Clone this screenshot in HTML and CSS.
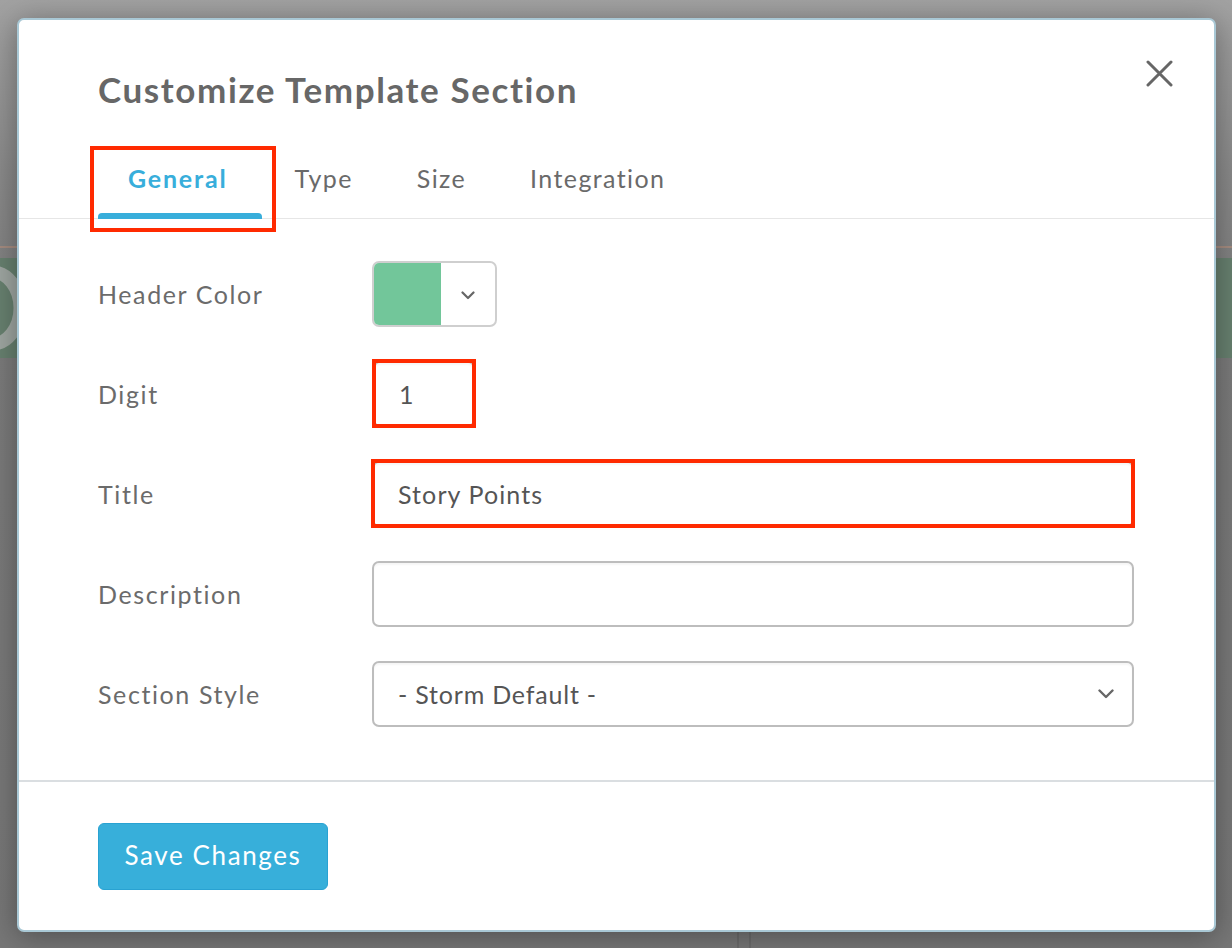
FILE: index.html
```html
<!DOCTYPE html>
<html lang="en">
<head>
<meta charset="utf-8">
<title>Customize Template Section</title>
<link rel="stylesheet" href="styles.css">
</head>
<body>
<div class="backdrop">
  <div class="bg-top"></div>
  <div class="bg-line"></div>
  <div class="bg-band">
    <svg class="bg-glyph" width="60" height="90" viewBox="0 0 60 90"><ellipse cx="20" cy="45" rx="28" ry="36" stroke="#9ea6a1" stroke-width="13" fill="none"/></svg>
  </div>
  <div class="bg-rest"><div class="bg-cols"></div></div>
</div>

<div class="modal">
  <header class="modal-head">
    <h1 class="modal-title">Customize Template Section</h1>
    <button class="close" aria-label="Close">
      <svg width="27" height="27" viewBox="0 0 27 27"><path d="M2 2 L25 25 M25 2 L2 25" stroke="#666" stroke-width="3" stroke-linecap="round" fill="none"/></svg>
    </button>
  </header>

  <nav class="tabs">
    <a class="tab tab-active marked">General</a>
    <a class="tab">Type</a>
    <a class="tab">Size</a>
    <a class="tab">Integration</a>
  </nav>

  <div class="modal-body">
    <div class="row">
      <label class="label">Header Color</label>
      <div class="color-picker">
        <span class="swatch"></span>
        <span class="picker-toggle">
          <svg width="14" height="9" viewBox="0 0 14 9"><path d="M1.5 1.5 L7 7 L12.5 1.5" stroke="#666" stroke-width="2.2" fill="none" stroke-linecap="round" stroke-linejoin="round"/></svg>
        </span>
      </div>
    </div>
    <div class="row">
      <label class="label">Digit</label>
      <div class="field field-digit marked-box">1</div>
    </div>
    <div class="row">
      <label class="label">Title</label>
      <div class="field field-wide marked-box">Story Points</div>
    </div>
    <div class="row">
      <label class="label">Description</label>
      <div class="field field-wide"></div>
    </div>
    <div class="row">
      <label class="label">Section Style</label>
      <div class="field field-wide select">
        <span>- Storm Default -</span>
        <svg width="16" height="10" viewBox="0 0 16 10"><path d="M1.5 1.5 L8 8 L14.5 1.5" stroke="#666" stroke-width="2.4" fill="none" stroke-linecap="round" stroke-linejoin="round"/></svg>
      </div>
    </div>
  </div>

  <footer class="modal-foot">
    <button class="btn-primary">Save Changes</button>
  </footer>
</div>
</body>
</html>
```

FILE: styles.css
```css
* { box-sizing: border-box; }

html, body {
  margin: 0;
  padding: 0;
  width: 1232px;
  height: 948px;
  overflow: hidden;
}

body {
  font-family: "Lato", "Open Sans", sans-serif;
  position: relative;
  background: #7a7a7a;
}

/* page behind the overlay */
.backdrop {
  position: absolute;
  inset: 0;
  display: flex;
  flex-direction: column;
  background: linear-gradient(180deg, #a2a2a2 0%, #8a8a8a 18%, #7b7b7b 35%, #777 100%);
}
.bg-top { height: 246px; }
.bg-line { height: 2px; background: #a58c80; }
.bg-band {
  margin-top: 10px;
  height: 100px;
  background: #67806f;
  overflow: hidden;
  position: relative;
}
.bg-glyph {
  position: absolute;
  left: -28px;
  top: 5px;
}
.bg-rest { flex: 1; position: relative; }
.bg-cols {
  position: absolute;
  left: 737px;
  bottom: 0;
  width: 14px;
  height: 20px;
  border-left: 2px solid #6c6c6c;
  border-right: 2px solid #6c6c6c;
}

/* modal (floats over the page) */
.modal {
  position: absolute;
  left: 17px;
  top: 18px;
  width: 1199px;
  background: #fff;
  border: 2px solid #a9c8d5;
  border-radius: 7px;
  box-shadow: 0 4px 30px rgba(0,0,0,0.35);
  color: #686868;
}

.modal-head {
  display: flex;
  justify-content: space-between;
  align-items: flex-start;
  padding: 48px 41px 0 79px;
}
.modal-title {
  margin: 0;
  font-size: 35px;
  line-height: 42px;
  font-weight: 700;
  letter-spacing: 1.6px;
  color: #676767;
}
.close {
  margin-top: -8px;
  padding: 0;
  border: 0;
  background: none;
  width: 27px;
  height: 27px;
  display: flex;
}

.tabs {
  margin-top: 36px;
  display: flex;
  padding-left: 79px;
  border-bottom: 1px solid #e6e6e6;
  height: 73px;
}
.tab {
  position: relative;
  height: 72px;
  padding: 17px 32px 0;
  font-size: 25px;
  line-height: 30px;
  letter-spacing: 1.4px;
  color: #6a6a6a;
}
.tab:first-child { padding-left: 30px; padding-right: 35px; }
.tab-active {
  color: #38aedb;
  font-weight: 700;
  letter-spacing: 1.8px;
}
.tab-active::after {
  content: "";
  position: absolute;
  left: 0;
  right: 0;
  bottom: -1px;
  height: 6px;
  border-radius: 4px 4px 0 0;
  background: #38aedb;
}
.marked::before {
  content: "";
  position: absolute;
  left: -8px;
  right: -14px;
  top: 0;
  bottom: -14px;
  border: 4px solid #ff2a00;
}

.modal-body {
  padding: 42px 80px 53px 79px;
  display: flex;
  flex-direction: column;
  gap: 34px;
}
.row {
  display: flex;
  align-items: center;
  height: 66px;
}
.label {
  width: 274px;
  font-size: 25px;
  letter-spacing: 1.6px;
  color: #6b6b6b;
}

.color-picker {
  width: 125px;
  height: 66px;
  border: 2px solid #cfcfcf;
  border-radius: 7px;
  display: flex;
  overflow: hidden;
}
.swatch {
  width: 67px;
  background: #72c69a;
}
.picker-toggle {
  flex: 1;
  display: flex;
  align-items: center;
  justify-content: center;
  padding-top: 2px;
}

.field {
  position: relative;
  height: 66px;
  border: 2px solid #bdbdbd;
  border-radius: 7px;
  box-shadow: inset 0 2px 2px rgba(0,0,0,0.04);
  display: flex;
  align-items: center;
  padding: 0 20px 0 24px;
  font-size: 25px;
  letter-spacing: 1.1px;
  color: #555;
}
.field-digit { width: 102px; margin-left: 1px; }
.field-wide { width: 762px; }
.marked-box::after {
  content: "";
  position: absolute;
  left: -3px;
  right: -3px;
  top: -4px;
  bottom: -3px;
  border: 4px solid #ff2a00;
}
.select {
  justify-content: space-between;
  padding-right: 18px;
  letter-spacing: 0.8px;
}

.modal-foot {
  border-top: 2px solid #dadee1;
  padding: 41px 79px 40px;
  display: flex;
}
.btn-primary {
  width: 230px;
  height: 67px;
  background: #37afda;
  border: 1px solid #29a2d2;
  border-radius: 6px;
  color: #fff;
  font-family: "Lato", sans-serif;
  font-size: 26px;
  letter-spacing: 1.6px;
  padding: 0 0 4px;
}
```
